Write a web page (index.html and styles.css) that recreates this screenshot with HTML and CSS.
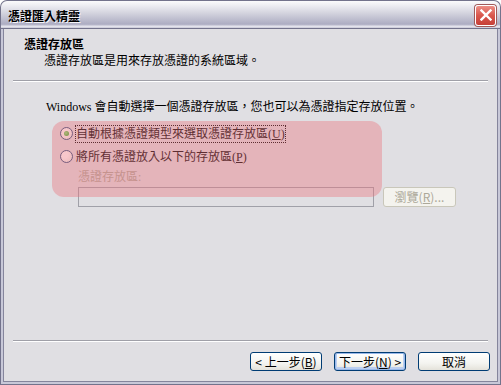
FILE: index.html
```html
<!DOCTYPE html>
<html lang="zh-Hant">
<head>
  <meta charset="UTF-8">
  <title>憑證匯入精靈</title>
  <link rel="stylesheet" href="styles.css">
</head>
<body>
  <div class="window">
    <div class="titlebar">
      <span class="title">憑證匯入精靈</span>
      <span class="close">
        <svg width="12" height="12" viewBox="0 0 12 12"><path d="M1.5 1.5 L10.5 10.5 M10.5 1.5 L1.5 10.5" stroke="#fff" stroke-width="2.4" stroke-linecap="square"/></svg>
      </span>
    </div>

    <div class="body">
      <div class="header">
        <h1>憑證存放區</h1>
        <p>憑證存放區是用來存放憑證的系統區域。</p>
      </div>
      <div class="sep"></div>

      <div class="page">
        <p class="intro">Windows 會自動選擇一個憑證存放區，您也可以為憑證指定存放位置。</p>

        <div class="options">
          <div class="radio-row">
            <span class="radio checked"></span>
            <span class="focus">自動根據憑證類型來選取憑證存放區(<u>U</u>)</span>
          </div>
          <div class="radio-row">
            <span class="radio"></span>
            <span class="plain">將所有憑證放入以下的存放區(<u>P</u>)</span>
          </div>
          <div class="store-label">憑證存放區:</div>
          <div class="store-row">
            <div class="textbox"></div>
            <span class="btn disabled">瀏覽(<u>R</u>)...</span>
          </div>
          <div class="highlight"></div>
        </div>
      </div>

      <div class="sep"></div>
      <div class="buttons">
        <span class="btn">&lt; 上一步(<u>B</u>)</span>
        <span class="btn default">下一步(<u>N</u>) &gt;</span>
        <span class="btn">取消</span>
      </div>
    </div>
  </div>
</body>
</html>
```

FILE: styles.css
```css
/* Wizard dialog, XP silver look */
body {
  margin: 0;
  background: #fff;
  font-family: "Liberation Serif", "Noto Sans CJK TC", serif;
  font-size: 12px;
  color: #000;
}

.window {
  width: 501px;
  height: 385px;
  display: flex;
  flex-direction: column;
}

/* Title bar */
.titlebar {
  height: 28px;
  box-sizing: border-box;
  display: flex;
  align-items: center;
  justify-content: space-between;
  padding: 0 4px 0 7px;
  border: 1px solid #73738c;
  border-bottom: none;
  border-radius: 7px 7px 0 0;
  background: linear-gradient(#fbfbfc 0%, #ececf1 18%, #d3d3de 45%, #bcbccd 70%, #acacc2 86%, #e6e6ee 94%, #c8c8d6 100%);
}

.title {
  font-family: "Noto Sans CJK TC", sans-serif;
  font-weight: bold;
  font-size: 12px;
  color: #000;
  text-shadow: 1px 1px 0 #f4f4f8;
  margin-top: 1px;
}

.close {
  width: 21px;
  height: 21px;
  box-sizing: border-box;
  display: flex;
  align-items: center;
  justify-content: center;
  border: 1px solid #fff;
  border-radius: 3px;
  background: linear-gradient(#ec8f86, #d9574d 50%, #c63f38);
  box-shadow: 0 0 0 1px #a05a5a;
  margin-top: 1px;
}

/* Dialog body */
.body {
  flex: 1;
  display: flex;
  flex-direction: column;
  background: #e0dfe3;
  border: 3px solid #c8c8d8;
  border-top: none;
  box-shadow: inset 1px 0 0 #85859c, inset -1px 0 0 #85859c, inset 0 -1px 0 #85859c;
  outline: 1px solid #73738c;
  outline-offset: -1px;
  padding: 0 1px 1px;
}

.header {
  padding: 8px 0 12px 20px;
  font-family: "Noto Sans CJK TC", sans-serif;
  line-height: 16px;
}

.header h1 {
  margin: 0;
  font-size: 12px;
  font-weight: bold;
}

.header p {
  margin: 0 0 0 20px;
}

.sep {
  margin: 0 9px;
  border-top: 1px solid #a0a0a8;
  border-bottom: 1px solid #fff;
}

.page {
  flex: 1;
  padding: 17px 0 0 42px;
  line-height: 16px;
}

.intro {
  margin: 0;
}

/* Radio group */
.options {
  position: relative;
  margin: 7px 0 0 6px;
}

.radio-row {
  height: 23px;
  display: flex;
  align-items: center;
  padding-left: 8px;
}

.radio {
  width: 13px;
  height: 13px;
  box-sizing: border-box;
  border: 1px solid #2c4f7e;
  border-radius: 50%;
  background: radial-gradient(circle at 35% 35%, #fff 30%, #e6e6e0 100%);
  margin-right: 2px;
  display: flex;
  align-items: center;
  justify-content: center;
}

.radio.checked::after {
  content: "";
  width: 5px;
  height: 5px;
  border-radius: 50%;
  background: radial-gradient(circle at 40% 40%, #8ce27a, #21a121);
}

.focus {
  border: 1px dotted #000;
  padding: 1px 0;
  line-height: 14px;
}

.plain {
  padding-left: 1px;
}

.store-label {
  padding: 1px 0 0 26px;
  height: 16px;
  color: #aca899;
}

.store-row {
  display: flex;
  margin: 2px 0 0 26px;
}

.textbox {
  width: 296px;
  height: 20px;
  box-sizing: border-box;
  border: 1px solid #a0a0a8;
}

.highlight {
  position: absolute;
  left: 0;
  top: -1px;
  width: 330px;
  height: 76px;
  border-radius: 12px;
  background: rgba(236, 115, 125, 0.4);
  pointer-events: none;
}

/* Buttons */
.btn {
  width: 72px;
  height: 19px;
  box-sizing: border-box;
  display: inline-flex;
  align-items: center;
  justify-content: center;
  border: 1px solid #003c74;
  border-radius: 3px;
  background: linear-gradient(#fff, #f4f4f0 60%, #e4e2da);
  font-family: "Noto Sans CJK TC", sans-serif;
  font-size: 12px;
  line-height: 1;
}

.btn.default {
  box-shadow: inset 0 0 0 1px #98b8ea, inset 0 -1px 0 2px #bccff0;
}

.btn.disabled {
  margin-left: 9px;
  height: 20px;
  width: 73px;
  border-color: #c9c7ba;
  background: #f4f3ee;
  color: #aca899;
}

.buttons {
  display: flex;
  justify-content: flex-end;
  gap: 12px;
  padding: 10px 7px 10px 0;
}
```
